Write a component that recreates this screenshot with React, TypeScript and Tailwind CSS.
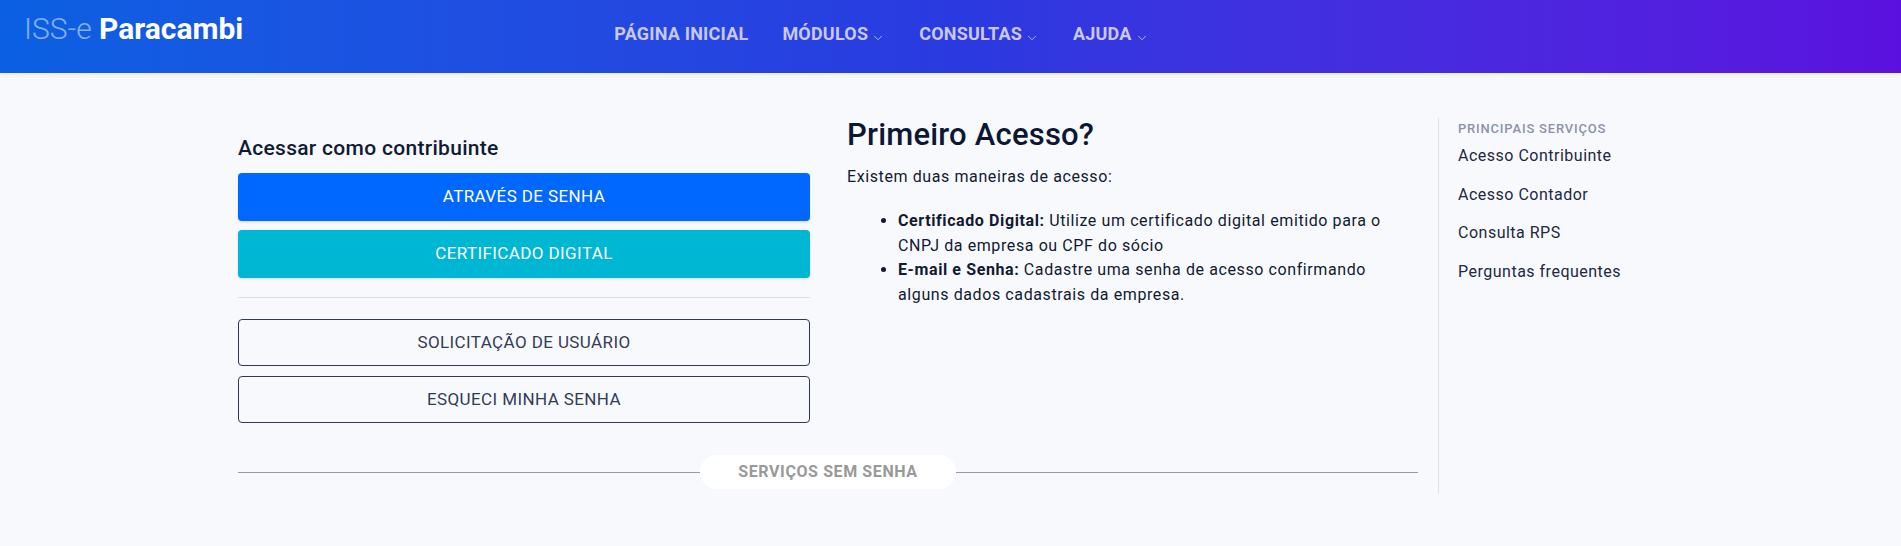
import { ChevronDown } from "lucide-react";

const font = { fontFamily: "Roboto, 'Noto Sans', sans-serif" };

const navItems = [
  { label: "PÁGINA INICIAL", menu: false },
  { label: "MÓDULOS", menu: true },
  { label: "CONSULTAS", menu: true },
  { label: "AJUDA", menu: true },
];

const services = ["Acesso Contribuinte", "Acesso Contador", "Consulta RPS", "Perguntas frequentes"];

function Header() {
  return (
    <header className="h-[73px] bg-gradient-to-r from-[#0a60e2] via-[#2a3ae0] to-[#5b10df] flex items-start shadow-[0_2px_6px_rgba(0,0,0,0.06)]">
      <a className="pl-[24px] pt-[11px] text-[30px] leading-[36px] whitespace-nowrap">
        <span className="text-white/50 font-light">ISS-e </span>
        <span className="text-white font-bold">Paracambi</span>
      </a>
      <nav className="ml-[371px] flex items-center gap-[34px] pt-[22px]">
        {navItems.map((n) => (
          <span key={n.label} className="flex items-end text-[18px] leading-[24px] font-bold text-[#c9c8f4] tracking-[0.2px]">
            {n.label}
            {n.menu && <ChevronDown className="ml-[3px] mb-[1px] w-[14px] h-[14px]" strokeWidth={1.5} />}
          </span>
        ))}
      </nav>
    </header>
  );
}

function LoginColumn() {
  const btn = "h-[48px] rounded-[4px] text-[17px] tracking-[0.4px]";
  return (
    <section className="flex flex-col">
      <h2 className="mt-[62px] text-[21px] leading-[26px] font-medium text-[#101a33] tracking-[0.3px]">Acessar como contribuinte</h2>
      <button className={`mt-[12px] ${btn} bg-[#0068fe] text-white shadow-sm`}>ATRAVÉS DE SENHA</button>
      <button className={`mt-[9px] ${btn} bg-[#00b7d3] text-white shadow-sm`}>CERTIFICADO DIGITAL</button>
      <hr className="mt-[19px] border-0 border-t border-[#dfe1ea]" />
      <button className={`mt-[21px] ${btn} !h-[47px] border border-[#2f3a55] text-[#333c55]`}>SOLICITAÇÃO DE USUÁRIO</button>
      <button className={`mt-[10px] ${btn} !h-[47px] border border-[#2f3a55] text-[#333c55]`}>ESQUECI MINHA SENHA</button>
    </section>
  );
}

function InfoColumn() {
  return (
    <section className="pt-[42px] text-[#111a30] tracking-[0.6px]">
      <h1 className="text-[31px] leading-[40px] font-medium text-[#0c1733] tracking-[0.2px]">Primeiro Acesso?</h1>
      <p className="mt-[10px] text-[16px] leading-[24px]">Existem duas maneiras de acesso:</p>
      <ul className="mt-[20px] pl-[51px] list-disc text-[16px] leading-[24.5px]">
        <li>
          <b className="font-bold">Certificado Digital:</b> Utilize um certificado digital emitido para o CNPJ da empresa ou CPF do sócio
        </li>
        <li>
          <b className="font-bold">E-mail e Senha:</b> Cadastre uma senha de acesso confirmando alguns dados cadastrais da empresa.
        </li>
      </ul>
    </section>
  );
}

export default function App() {
  return (
    <div className="min-h-[546px] bg-[#f8f9fd]" style={font}>
      <Header />
      <div className="flex pl-[238px]">
        <div className="w-[1180px] flex flex-col">
          <div className="grid grid-cols-[572px_571px] gap-[37px]">
            <LoginColumn />
            <InfoColumn />
          </div>
          <div className="mt-[32px] flex items-center">
            <div className="flex-1 h-px bg-[#9a9a9a]" />
            <span className="px-[38px] h-[34px] flex items-center rounded-full bg-white text-[16px] font-bold text-[#999999] tracking-[0.6px]">SERVIÇOS SEM SENHA</span>
            <div className="flex-1 h-px bg-[#9a9a9a]" />
          </div>
        </div>
        <aside className="ml-[20px] mt-[45px] h-[376px] border-l border-[#dfe1ea] pl-[19px] pt-[3px]">
          <h3 className="text-[13px] leading-[16px] font-medium text-[#8a93a5] tracking-[0.8px]">PRINCIPAIS SERVIÇOS</h3>
          <ul className="mt-[7px] flex flex-col gap-[14.5px]">
            {services.map((s) => (
              <li key={s} className="text-[16px] leading-[24px] text-[#1d2842] tracking-[0.5px]">{s}</li>
            ))}
          </ul>
        </aside>
      </div>
    </div>
  );
}
